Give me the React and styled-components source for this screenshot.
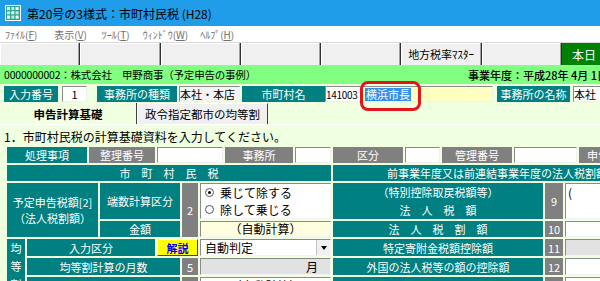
import React from "react";
import styled, { createGlobalStyle } from "styled-components";

const GlobalStyle = createGlobalStyle`
  html, body { margin: 0; padding: 0; }
  body {
    width: 600px; height: 281px; overflow: hidden;
    font-family: "Noto Sans CJK JP", "Noto Sans", sans-serif;
    background: #f0ffe0;
  }
  * { box-sizing: border-box; }
`;

const TEAL = "#008080";
const GRAY = "#808080";

const Window = styled.div`
  width: 600px; height: 281px; overflow: hidden;
  display: flex; flex-direction: column;
`;

const TitleBar = styled.div`
  height: 26px; flex: none;
  background: #1f9de9;
  display: flex; align-items: center; gap: 6px;
  padding-left: 5px;
  color: #000; font-size: 12px; white-space: nowrap;
`;

const MenuBar = styled.div`
  height: 16px; flex: none; background: #fff;
  display: flex; align-items: center;
  font-size: 10px; color: #707070; white-space: nowrap;
`;

const MenuItem = styled.span`
  margin-left: ${(p) => p.$ml}px;
  u { text-decoration: underline; }
`;

const ToolBar = styled.div`
  height: 23px; flex: none; display: flex;
  border-top: 1px solid #d8d8d8;
  background: #f0f0f0;
`;

const ToolButton = styled.div`
  width: 80.3px; flex: none; height: 100%;
  background: #f0f0f0;
  border-right: 1px solid #303030;
  box-shadow: inset -1px 0 0 #a0a0a0, inset 1px 1px 0 #fff;
  display: flex; align-items: center; justify-content: center;
  font-size: 11px; color: #000; white-space: nowrap;
`;

const TodayBox = styled.div`
  flex: 1; height: 100%; background: #008000; color: #fff;
  font-size: 12px; display: flex; align-items: center;
  padding-left: 10px; white-space: nowrap; overflow: hidden;
`;

const CompanyBar = styled.div`
  height: 19px; flex: none; background: #80ff80;
  display: flex; align-items: center; white-space: nowrap; overflow: hidden;
  font-size: 10.5px; color: #000; padding-left: 4px;
`;

const CompanyName = styled.span`
  flex: 0 0 464px;
  letter-spacing: -0.2px;
`;

const FiscalYear = styled.span`
  flex: none; font-weight: 500; font-size: 11px;
`;

const Panel = styled.div`
  flex: 1; background: #f0ffe0; position: relative;
`;

const InfoRow = styled.div`
  display: flex; height: 16px; margin-top: 2px; white-space: nowrap;
`;

const Cell = styled.div`
  flex: none;
  width: ${(p) => p.$w}px;
  margin-left: ${(p) => p.$ml || 0}px;
  height: 100%;
  display: flex; align-items: center;
  justify-content: ${(p) => p.$align || "center"};
  font-size: ${(p) => p.$fs || 11}px;
  letter-spacing: ${(p) => p.$ls || 0}px;
  overflow: hidden; white-space: nowrap;
  color: ${(p) => (p.$kind === "teal" || p.$kind === "gray" ? "#fff" : "#000")};
  background: ${(p) =>
    p.$kind === "teal" ? TEAL :
    p.$kind === "gray" ? GRAY :
    p.$kind === "yellow" ? "#ffffc0" :
    p.$kind === "plain" ? "#f4f4f4" : "#fff"};
  border: ${(p) => (p.$kind === "teal" || p.$kind === "gray" ? "none" : "1px solid")};
  border-color: #8a8a8a #f0f0f0 #f0f0f0 #8a8a8a;
  padding: 0 ${(p) => (p.$pad ?? 0)}px;
  position: relative;
`;

const Selected = styled.span`
  background: #3390ec; color: #fff; padding: 0 1px; line-height: 13px;
`;

const HighlightRing = styled.div`
  position: absolute; left: -3px; top: -6px;
  width: 61px; height: 30px;
  border: 3px solid #e3151b; border-radius: 8px;
  z-index: 2; pointer-events: none;
`;

const TabStrip = styled.div`
  display: flex; height: 22px; margin-top: 1px;
  border-bottom: 1px solid #fff;
`;

const Tab = styled.div`
  flex: none; width: ${(p) => p.$w}px; height: 100%;
  display: flex; align-items: center; justify-content: center;
  font-size: 11.5px; color: #000;
  font-weight: ${(p) => (p.$active ? 700 : 400)};
  background: ${(p) => (p.$active ? "#f0ffe0" : "#f0f0f0")};
  border-right: 1px solid #404040;
  border-left: ${(p) => (p.$active ? "none" : "1px solid #fff")};
  border-top: ${(p) => (p.$active ? "none" : "1px solid #fff")};
`;

const Instruction = styled.div`
  height: 16px; margin-top: 4px; padding-left: 4px;
  font-size: 12px; line-height: 16px; color: #000; white-space: nowrap;
`;

const HeaderRow = styled.div`
  display: flex; gap: 2px; height: 16px; margin: 2px 0 0 7px;
`;

const FormGrid = styled.div`
  display: grid; margin: 2px 0 0 7px;
  grid-template-columns: 18px 71px 55px 23px 16px 131px 210px 18px 96px;
  grid-template-rows: 16px 36px 16px 17px 17px 17px;
  gap: 2px;
`;

const GCell = styled.div`
  grid-column: ${(p) => p.$c};
  grid-row: ${(p) => p.$r};
  display: flex; flex-direction: column;
  align-items: ${(p) => p.$align || "center"};
  justify-content: ${(p) => p.$justify || "center"};
  font-size: 11px; line-height: ${(p) => p.$lh || 14}px;
  white-space: nowrap; overflow: hidden;
  padding: 0 ${(p) => p.$pad || 0}px;
  color: ${(p) => (p.$kind === "teal" || p.$kind === "gray" ? "#fff" : "#000")};
  background: ${(p) =>
    p.$kind === "teal" ? TEAL :
    p.$kind === "gray" ? GRAY :
    p.$kind === "cream" ? "#ffffe0" :
    p.$kind === "disabled" ? "#e2e2e2" : "#fff"};
  border: ${(p) => (p.$kind === "teal" || p.$kind === "gray" ? "none" : "1px solid")};
  border-color: #8a8a8a #f4f4f4 #f4f4f4 #8a8a8a;
`;

const VerticalLabel = styled(GCell)`
  justify-content: flex-start;
  padding-top: 1px;
  span { height: 19px; line-height: 17px; }
`;

const RadioGroup = styled(GCell)`
  align-items: flex-start; justify-content: center; gap: 3px;
  padding-left: 4px; font-size: 12px;
`;

const RadioOption = styled.label`
  display: flex; align-items: center; gap: 6px; line-height: 14px;
`;

const RadioDot = styled.span`
  width: 9px; height: 9px; border-radius: 50%;
  border: 1px solid #555; background: #fff;
  display: flex; align-items: center; justify-content: center;
  &::after {
    content: ""; width: 3px; height: 3px; border-radius: 50%;
    background: ${(p) => (p.$on ? "#000" : "transparent")};
  }
`;

const HelpButton = styled.div`
  grid-column: ${(p) => p.$c};
  grid-row: ${(p) => p.$r};
  background: #ffff00; color: #0000ff; font-weight: 700;
  font-size: 11px; display: flex; align-items: center; justify-content: center;
  border: 1px solid; border-color: #fff #404040 #404040 #fff;
`;

const SelectBox = styled(GCell)`
  flex-direction: row; justify-content: space-between; align-items: stretch;
  padding-left: 4px;
  span { display: flex; align-items: center; }
`;

const DropButton = styled.div`
  width: 14px; background: #f0f0f0;
  border-left: 1px solid #c0c0c0;
  display: flex; align-items: center; justify-content: center;
  &::after {
    content: ""; border-left: 3.5px solid transparent; border-right: 3.5px solid transparent;
    border-top: 4px solid #000;
  }
`;

function AppIcon() {
  return (
    <svg width="16" height="16" viewBox="0 0 16 16">
      <rect x="0" y="0" width="16" height="16" fill="#fff" />
      <rect x="1" y="1" width="14" height="14" fill="#2fa889" />
      {[0, 1, 2].map((r) =>
        [0, 1, 2].map((c) => (
          <rect key={`${r}-${c}`} x={2 + c * 4.3} y={2 + r * 4.3} width="3" height="3"
            fill={(r + c) % 2 ? "#bfe9ff" : "#ffffff"} />
        ))
      )}
    </svg>
  );
}

const menus = [
  { t: "ﾌｧｲﾙ", k: "F", ml: 5 },
  { t: "表示", k: "V", ml: 17 },
  { t: "ﾂｰﾙ", k: "T", ml: 15 },
  { t: "ｳｨﾝﾄﾞｳ", k: "W", ml: 13 },
  { t: "ﾍﾙﾌﾟ", k: "H", ml: 12 },
];

const headerCells = [
  { w: 80, kind: "teal", t: "処理事項" },
  { w: 66, kind: "gray", t: "整理番号" },
  { w: 66, kind: "input", t: "" },
  { w: 68, kind: "gray", t: "事務所" },
  { w: 36, kind: "input", t: "" },
  { w: 70, kind: "gray", t: "区分" },
  { w: 35, kind: "input", t: "" },
  { w: 70, kind: "gray", t: "管理番号" },
  { w: 63, kind: "input", t: "" },
  { w: 60, kind: "gray", t: "申告区分" },
];

const rightRows = [
  { r: "3", label: "法　人　税　割　額", n: "10", kind: "input" },
  { r: "4", label: "特定寄附金税額控除額", n: "11", kind: "disabled" },
  { r: "5", label: "外国の法人税等の額の控除額", n: "12", kind: "input" },
  { r: "6", label: "還付法人税額等の控除額", n: "13", kind: "input" },
];

export default function App() {
  return (
    <>
      <GlobalStyle />
      <Window>
        <TitleBar>
          <AppIcon />
          <span>第20号の3様式：市町村民税 (H28)</span>
        </TitleBar>
        <MenuBar>
          {menus.map((m) => (
            <MenuItem key={m.k} $ml={m.ml}>
              {m.t}(<u>{m.k}</u>)
            </MenuItem>
          ))}
        </MenuBar>
        <ToolBar>
          <ToolButton />
          <ToolButton />
          <ToolButton />
          <ToolButton />
          <ToolButton />
          <ToolButton>地方税率ﾏｽﾀｰ</ToolButton>
          <ToolButton />
          <TodayBox>本日：平成28年 5月31日</TodayBox>
        </ToolBar>
        <CompanyBar>
          <CompanyName>0000000002：株式会社　甲野商事（予定申告の事例）</CompanyName>
          <FiscalYear>事業年度：平成28年 4月 1日～平成29年 3月31日</FiscalYear>
        </CompanyBar>
        <Panel>
          <InfoRow>
            <Cell $w={54} $ml={4} $kind="teal">入力番号</Cell>
            <Cell $w={25} $ml={4} $kind="input">1</Cell>
            <Cell $w={80} $ml={10} $kind="teal">事務所の種類</Cell>
            <Cell $w={61} $ml={2} $kind="plain" $align="flex-start">本社・本店</Cell>
            <Cell $w={83} $ml={2} $kind="teal">市町村名</Cell>
            <Cell $w={36} $kind="input" $align="flex-start" $fs={10} $ls={-0.3}>141003</Cell>
            <Cell $w={131} $ml={1} $kind="yellow" $align="flex-start" $pad={2} style={{ overflow: "visible" }}>
              <Selected>横浜市長</Selected>
              <HighlightRing />
            </Cell>
            <Cell $w={73} $ml={4} $kind="teal">事務所の名称</Cell>
            <Cell $w={70} $ml={3} $kind="input" $align="flex-start">本社</Cell>
          </InfoRow>
          <TabStrip>
            <Tab $w={137} $active>申告計算基礎</Tab>
            <Tab $w={131}>政令指定都市の均等割</Tab>
          </TabStrip>
          <Instruction>1．市町村民税の計算基礎資料を入力してください。</Instruction>
          <HeaderRow>
            {headerCells.map((c, i) => (
              <Cell key={i} $w={c.w} $kind={c.kind}>{c.t}</Cell>
            ))}
          </HeaderRow>
          <FormGrid>
            <GCell $c="1 / 7" $r="1" $kind="teal">市　町　村　民　税</GCell>
            <GCell $c="7 / 10" $r="1" $kind="teal">前事業年度又は前連結事業年度の法人税割額</GCell>

            <GCell $c="1 / 3" $r="2 / 4" $kind="teal" $lh={16}>
              <span>予定申告税額[2]</span>
              <span>（法人税割額）</span>
            </GCell>
            <GCell $c="3 / 5" $r="2" $kind="teal">端数計算区分</GCell>
            <GCell $c="3 / 5" $r="3" $kind="teal">金額</GCell>
            <GCell $c="5" $r="2 / 4" $kind="gray">2</GCell>
            <RadioGroup $c="6" $r="2" $kind="input">
              <RadioOption><RadioDot $on />乗じて除する</RadioOption>
              <RadioOption><RadioDot />除して乗じる</RadioOption>
            </RadioGroup>
            <GCell $c="6" $r="3" $kind="cream" $lh={14} style={{ fontSize: 12 }}>（自動計算）</GCell>

            <GCell $c="7" $r="2" $kind="teal" $lh={18}>
              <span>（特別控除取戻税額等）</span>
              <span>法　人　税　額</span>
            </GCell>
            <GCell $c="8" $r="2" $kind="gray">9</GCell>
            <GCell $c="9" $r="2" $kind="input" $align="flex-start" $justify="flex-start" $pad={2} style={{ fontSize: 12, paddingTop: 2 }}>(</GCell>

            {rightRows.map((row) => (
              <React.Fragment key={row.n}>
                <GCell $c="7" $r={row.r} $kind="teal">{row.label}</GCell>
                <GCell $c="8" $r={row.r} $kind="gray">{row.n}</GCell>
                <GCell $c="9" $r={row.r} $kind={row.kind} />
              </React.Fragment>
            ))}

            <VerticalLabel $c="1" $r="4 / 7" $kind="teal">
              <span>均</span>
              <span>等</span>
              <span>割</span>
            </VerticalLabel>
            <GCell $c="2 / 4" $r="4" $kind="teal">入力区分</GCell>
            <HelpButton $c="4 / 6" $r="4">解説</HelpButton>
            <SelectBox $c="6" $r="4" $kind="input" style={{ fontSize: 12 }}>
              <span>自動判定</span>
              <DropButton />
            </SelectBox>
            <GCell $c="2 / 5" $r="5" $kind="teal">均等割計算の月数</GCell>
            <GCell $c="5" $r="5" $kind="gray">5</GCell>
            <GCell $c="6" $r="5" $kind="disabled" $align="flex-end" $pad={12} style={{ fontSize: 12 }}>月</GCell>
            <GCell $c="2 / 5" $r="6" $kind="teal">均等割額</GCell>
            <GCell $c="5" $r="6" $kind="gray">6</GCell>
            <GCell $c="6" $r="6" $kind="input" style={{ fontSize: 12 }}>（自動計算）</GCell>
          </FormGrid>
        </Panel>
      </Window>
    </>
  );
}
